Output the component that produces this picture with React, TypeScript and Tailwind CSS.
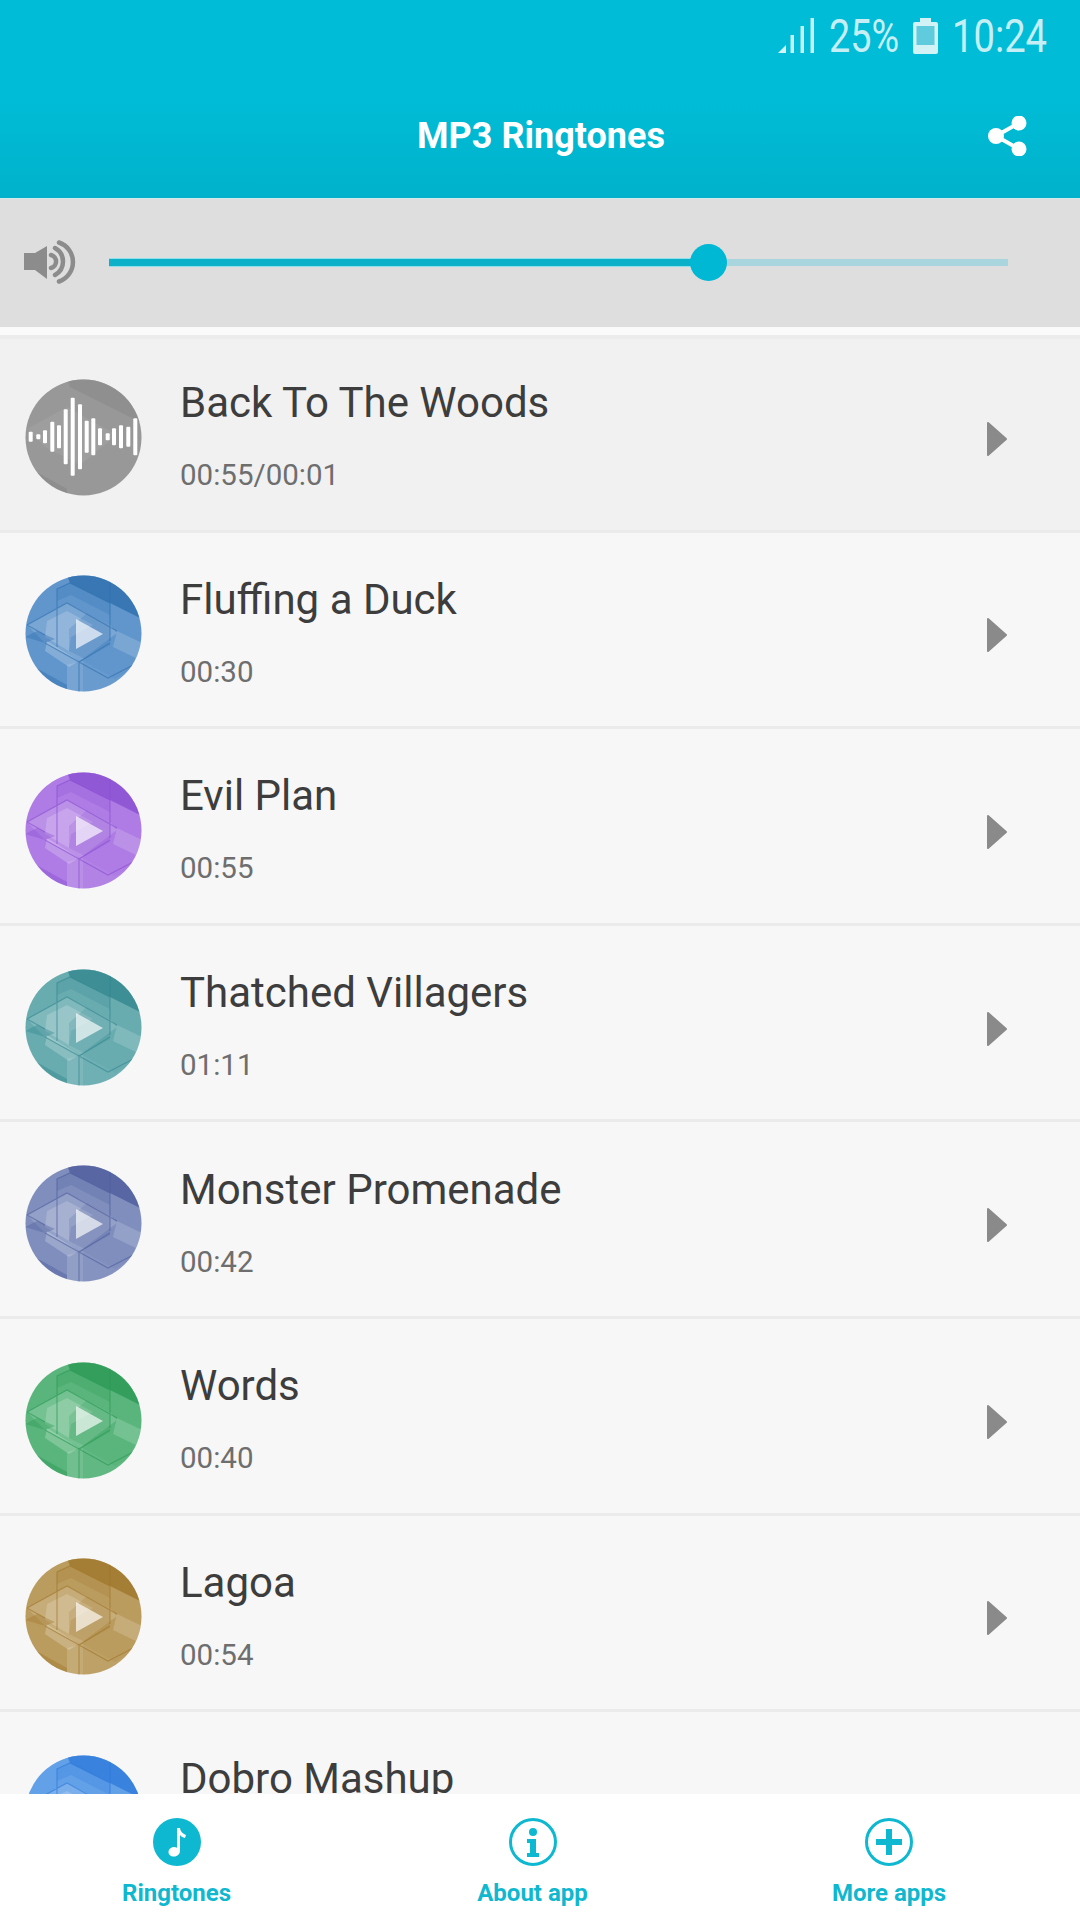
import React from "react";

const rows = [
  { t: "Fluffing a Duck", d: "00:30", c: "#6196cc", k: "#2e6fae" },
  { t: "Evil Plan", d: "00:55", c: "#ae7ce4", k: "#8a4fd2" },
  { t: "Thatched Villagers", d: "01:11", c: "#68acb0", k: "#33878f" },
  { t: "Monster Promenade", d: "00:42", c: "#7f8ebd", k: "#4f5e9c" },
  { t: "Words", d: "00:40", c: "#5ab57c", k: "#2a9a55" },
  { t: "Lagoa", d: "00:54", c: "#bb9c5f", k: "#a0772a" },
  { t: "Dobro Mashup", d: "00:48", c: "#62a0e8", k: "#2f7adb" },
];

function Disc({ c, k }: { c: string; k: string }) {
  return (
    <svg width="117" height="117" viewBox="0 0 117 117" className="shrink-0">
      <defs>
        <clipPath id="discclip"><circle cx="58.5" cy="58.5" r="58" /></clipPath>
      </defs>
      <g clipPath="url(#discclip)">
        <rect width="117" height="117" fill={c} />
        <path d="M42 0H117V44L85 28 45 8Z" fill={k} opacity="0.8" />
        <path d="M32 14L45 8 85 28V40L46 20 32 26Z" fill={k} opacity="0.25" />
        <path d="M2 50L42 28 85 50 92 58 55 86 20 68Z" fill="#fff" opacity="0.16" />
        <path d="M22 46L42 36 68 50 46 62 44 76 20 62Z" fill="#fff" opacity="0.18" />
        <path d="M44 54L62 38 85 50V70L60 84 44 76Z" fill={k} opacity="0.2" />
        <path d="M22 66L54 86 44 92 20 76Z" fill="#fff" opacity="0.22" />
        <path d="M92 56L117 68V86L88 72Z" fill="#fff" opacity="0.16" />
        <path d="M0 62L12 56 30 64 20 68Z" fill={k} opacity="0.4" />
        <path d="M6 90L42 110V117H20Z" fill={k} opacity="0.45" />
        <path d="M42 90L58 86V117H42Z" fill="#fff" opacity="0.14" />
        <path d="M58 86L90 104 117 88V117H58Z" fill="#fff" opacity="0.05" />
        <path d="M32 72V14L45 8 85 28V66M2 50L42 28 92 56M2 50L20 60M20 68L54 87 83 103 114 87M54 87L85 68M54 87V117M72 0L85 6V28" fill="none" stroke={k} strokeWidth="1.2" opacity="0.6" />
        <path d="M51 44L78 59 51 74Z" fill="#fff" opacity="0.66" />
      </g>
    </svg>
  );
}

function WaveDisc() {
  const bars: [number, number][] = [[5.7,10],[13.3,5],[20,13],[27.3,30],[34,23],[40.7,55],[47.7,78],[55,65],[61.7,32],[68.3,37],[75,17],[82.7,7],[89,17],[96,23],[103.3,20],[110.3,37]];
  return (
    <svg width="117" height="117" viewBox="0 0 117 117" className="shrink-0">
      <defs>
        <clipPath id="waveclip"><circle cx="58.5" cy="58.5" r="58" /></clipPath>
      </defs>
      <g clipPath="url(#waveclip)">
        <rect width="117" height="117" fill="#989898" />
        <path d="M42 0H117V44L85 28 45 8Z" fill="#8c8c8c" opacity="0.7" />
        <path d="M2 50L42 28 92 56 55 86 20 68Z" fill="#fff" opacity="0.06" />
        <path d="M6 90L42 110V117H20Z" fill="#808080" opacity="0.4" />
        {bars.map(([x, h], i) => (
          <rect key={i} x={x - 2} y={57.7 - h / 2} width="4" height={h} rx="1" fill="#fff" />
        ))}
      </g>
    </svg>
  );
}

function Row({ t, d, first, children }: { t: string; d: string; first?: boolean; children: React.ReactNode }) {
  return (
    <div className={`shrink-0 border-b-[3px] border-[#ebebeb] ${first ? "h-[193.6px] bg-[#f1f1f1]" : "h-[196.6px] bg-[#f7f7f7]"}`}>
      <div className={`flex h-full items-center pl-[25px] pr-[73px] ${first ? "pt-[6px]" : "pt-[9px]"}`}>
        {children}
        <div className="mb-[3px] ml-[38px] flex-1">
          <div className="text-[42px] leading-[48px] text-[#3d3d3d]">{t}</div>
          <div className="mt-[31px] text-[29.5px] leading-[34px] text-[#6e6e6e]">{d}</div>
        </div>
        <svg width="20" height="36" viewBox="0 0 20 36" className="mt-[3px]">
          <path d="M1 2L19 18 1 34Z" fill="#8a8a8a" stroke="#8a8a8a" strokeWidth="2" strokeLinejoin="round" />
        </svg>
      </div>
    </div>
  );
}

function TabLabel({ children }: { children: React.ReactNode }) {
  return <div className="mt-[12px] text-[24px] font-bold leading-[30px] text-[#0fb8cf]">{children}</div>;
}

export default function App() {
  return (
    <div className="flex h-[1920px] w-[1080px] flex-col overflow-hidden bg-white font-['Roboto',sans-serif]">
      <header className="h-[198px] shrink-0 bg-gradient-to-b from-[#00bcd6] via-[#00bcd6] to-[#00b2cb]">
        <div className="flex h-[74px] items-center justify-end pb-[2px] pr-[33px] text-[#c5eff5]">
          <svg width="37" height="36" viewBox="0 0 37 36" className="mr-[14px] shrink-0">
            <path d="M0 35L8 27V35Z" fill="#d6f3f7" />
            <path d="M12.500 17h3.500v18h-3.500zM22.500 8h3.500v27h-3.500zM32.500 0h3.500v35h-3.500z" fill="#c5eff5" />
          </svg>
          <div className="w-[70px] whitespace-nowrap text-[46px] leading-none origin-left [transform:scaleX(0.82)]">25%</div>
          <svg width="25" height="36" viewBox="0 0 25 36" className="mx-[14px] shrink-0">
            <path d="M7 0h11v4h5a2 2 0 012 2v28a2 2 0 01-2 2H2a2 2 0 01-2-2V6a2 2 0 012-2h5z" fill="#d2f2f6" />
            <rect x="3.500" y="8" width="18" height="19" fill="#5fcbdc" />
          </svg>
          <div className="w-[95px] whitespace-nowrap text-[46px] leading-none origin-left [transform:scaleX(0.83)]">10:24</div>
        </div>
        <div className="relative flex h-[124px] items-center justify-center pl-[2px] text-[36px] font-bold text-white">
          <span>MP3 Ringtones</span>
          <svg width="40" height="40" viewBox="0 0 40 40" className="absolute right-[52px] top-[42px]">
            <path d="M31 7L8 20l23 13" fill="none" stroke="#fff" strokeWidth="4" />
            <circle cx="31" cy="7" r="7.500" fill="#fff" />
            <circle cx="8" cy="20" r="8" fill="#fff" />
            <circle cx="31" cy="33" r="7.500" fill="#fff" />
          </svg>
        </div>
      </header>

      <div className="flex h-[129px] shrink-0 items-center border-t border-[#d3e9ec] bg-[#dedede] pb-[2px] pl-[24px] pr-[72px]">
        <svg width="52" height="44" viewBox="0 0 52 44" className="shrink-0">
          <path d="M0 13h11L23 6v33L11 30H0Z" fill="#8c8c8c" />
          <path d="M27 15a6.700 6.700 0 010 13M31 8a15.400 15.400 0 010 27M35 2.500a20.600 20.600 0 010 39" fill="none" stroke="#8c8c8c" strokeWidth="4.500" strokeLinecap="round" />
        </svg>
        <div className="relative ml-[33px] h-[7px] flex-1 bg-[#a9d5de]">
          <div className="absolute inset-y-0 left-0 w-[590px] bg-[#0cb0c8] shadow-[0_1px_0_#8fe0ec,0_-1px_0_#8fe0ec]" />
          <div className="absolute left-[581px] top-[-15px] h-[37px] w-[37px] rounded-full bg-[#00b8d4]" />
        </div>
      </div>

      <div className="h-[12px] shrink-0 border-b-[4px] border-[#ececec] bg-[#fafafa]" />

      <div className="flex min-h-0 flex-1 flex-col overflow-hidden">
        <Row t="Back To The Woods" d="00:55/00:01" first><WaveDisc /></Row>
        {rows.map((r) => (
          <Row key={r.t} t={r.t} d={r.d}><Disc c={r.c} k={r.k} /></Row>
        ))}
      </div>

      <nav className="grid h-[126px] shrink-0 grid-cols-[353px_359px_354px] bg-white pt-[24px] text-center">
        <div className="flex flex-col items-center">
          <svg width="48" height="48" viewBox="0 0 48 48">
            <circle cx="24" cy="24" r="24" fill="#0db8d0" />
            <path d="M24 10h3c.5 4 3 5.500 6 7l-1 3c-2-.5-4-1.500-5-3v15.500c0 3.500-2.500 6-6 6s-5.500-2-5.500-4.500 2.500-5 5.500-5c1 0 2 .2 3 .7Z" fill="#fff" />
          </svg>
          <TabLabel>Ringtones</TabLabel>
        </div>
        <div className="flex flex-col items-center">
          <svg width="48" height="48" viewBox="0 0 48 48">
            <circle cx="24" cy="24" r="22.500" fill="none" stroke="#0db8d0" strokeWidth="3" />
            <circle cx="24" cy="14" r="4" fill="#0db8d0" />
            <path d="M18 21h9v14h3v4H18v-4h3V25h-3Z" fill="#0db8d0" />
          </svg>
          <TabLabel>About app</TabLabel>
        </div>
        <div className="flex flex-col items-center">
          <svg width="48" height="48" viewBox="0 0 48 48">
            <circle cx="24" cy="24" r="22.500" fill="none" stroke="#0db8d0" strokeWidth="3" />
            <path d="M21 11h6v10h10v6H27v10h-6V27H11v-6h10Z" fill="#0db8d0" />
          </svg>
          <TabLabel>More apps</TabLabel>
        </div>
      </nav>
    </div>
  );
}
